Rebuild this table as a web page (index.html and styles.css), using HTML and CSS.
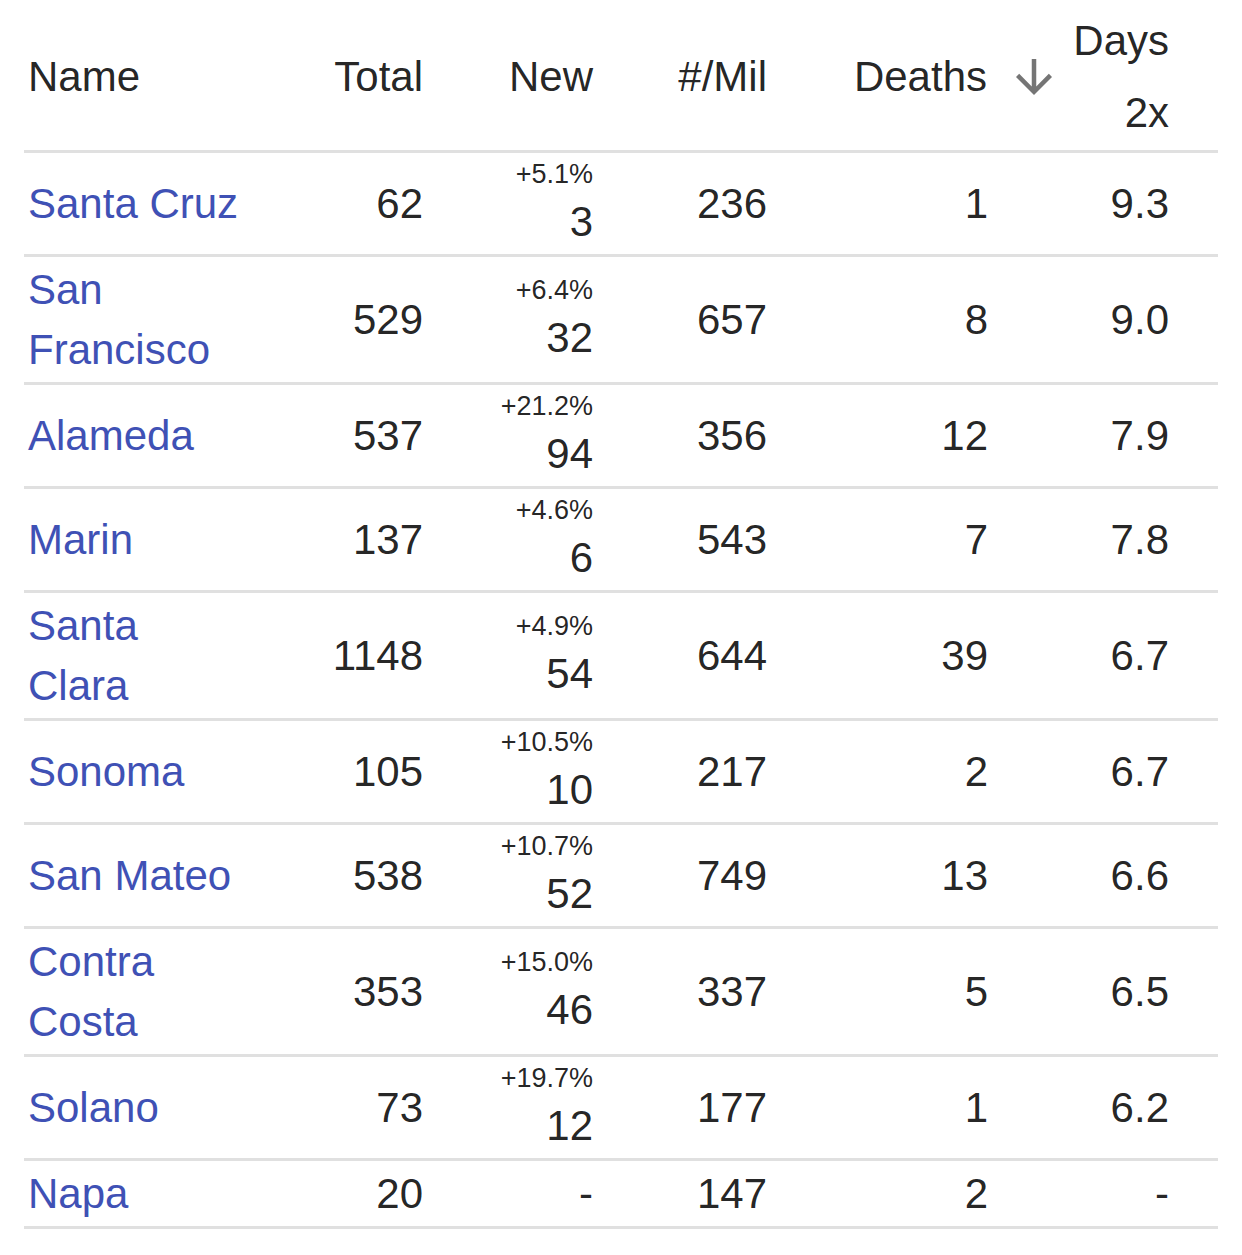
FILE: index.html
```html
<!DOCTYPE html>
<html lang="en">
<head>
<meta charset="utf-8">
<title>Bay Area counties</title>
<link rel="stylesheet" href="styles.css">
</head>
<body>
<div class="wrap">
<table class="grid">
  <colgroup>
    <col class="c-name"><col class="c-total"><col class="c-new"><col class="c-mil"><col class="c-deaths"><col class="c-days">
  </colgroup>
  <thead>
    <tr>
      <th class="left">Name</th>
      <th>Total</th>
      <th>New</th>
      <th>#/Mil</th>
      <th class="deaths-h"><span class="sort">Deaths<svg class="arrow" viewBox="0 0 24 24" width="54" height="54"><path d="M20 12l-1.41-1.41L13 16.17V4h-2v12.17l-5.58-5.59L4 12l8 8 8-8z"/></svg></span></th>
      <th class="last">Days 2x</th>
    </tr>
  </thead>
  <tbody>
    <tr><td class="left"><a href="#">Santa Cruz</a></td><td>62</td><td><span class="pct">+5.1%</span><span class="num">3</span></td><td>236</td><td class="deaths">1</td><td class="last">9.3</td></tr>
    <tr><td class="left"><a href="#">San Francisco</a></td><td>529</td><td><span class="pct">+6.4%</span><span class="num">32</span></td><td>657</td><td class="deaths">8</td><td class="last">9.0</td></tr>
    <tr><td class="left"><a href="#">Alameda</a></td><td>537</td><td><span class="pct">+21.2%</span><span class="num">94</span></td><td>356</td><td class="deaths">12</td><td class="last">7.9</td></tr>
    <tr><td class="left"><a href="#">Marin</a></td><td>137</td><td><span class="pct">+4.6%</span><span class="num">6</span></td><td>543</td><td class="deaths">7</td><td class="last">7.8</td></tr>
    <tr><td class="left"><a href="#">Santa Clara</a></td><td>1148</td><td><span class="pct">+4.9%</span><span class="num">54</span></td><td>644</td><td class="deaths">39</td><td class="last">6.7</td></tr>
    <tr><td class="left"><a href="#">Sonoma</a></td><td>105</td><td><span class="pct">+10.5%</span><span class="num">10</span></td><td>217</td><td class="deaths">2</td><td class="last">6.7</td></tr>
    <tr><td class="left"><a href="#">San Mateo</a></td><td>538</td><td><span class="pct">+10.7%</span><span class="num">52</span></td><td>749</td><td class="deaths">13</td><td class="last">6.6</td></tr>
    <tr><td class="left"><a href="#">Contra Costa</a></td><td>353</td><td><span class="pct">+15.0%</span><span class="num">46</span></td><td>337</td><td class="deaths">5</td><td class="last">6.5</td></tr>
    <tr><td class="left"><a href="#">Solano</a></td><td>73</td><td><span class="pct">+19.7%</span><span class="num">12</span></td><td>177</td><td class="deaths">1</td><td class="last">6.2</td></tr>
    <tr><td class="left"><a href="#">Napa</a></td><td>20</td><td>-</td><td>147</td><td class="deaths">2</td><td class="last">-</td></tr>
  </tbody>
</table>
</div>
</body>
</html>
```

FILE: styles.css
```css
html, body {
  margin: 0;
  padding: 0;
  background: #ffffff;
}

.wrap {
  padding: 0 24px;
}

.grid {
  width: 1194px;
  table-layout: fixed;
  border-collapse: separate;
  border-spacing: 0;
  font-family: "Liberation Sans", Arial, Helvetica, sans-serif;
  font-size: 42px;
  color: rgba(0, 0, 0, 0.87);
}

.c-name { width: 224px; }
.c-total { width: 178px; }
.c-new { width: 170px; }
.c-mil { width: 174px; }
.c-deaths { width: 294px; }
.c-days { width: 154px; }

.grid th,
.grid td {
  text-align: right;
  vertical-align: middle;
  border-bottom: 3px solid #e0e0e0;
  padding: 3px 3px 2px 4px;
  line-height: 60px;
  font-weight: 400;
}

.grid th {
  line-height: 72px;
  padding-top: 5px;
  padding-bottom: 1px;
}

.grid .left {
  text-align: left;
}

.grid .last {
  padding-right: 49px;
}

.grid td.deaths {
  padding-right: 76px;
}

.grid th.deaths-h {
  padding-right: 3px;
}

.sort {
  display: inline-flex;
  align-items: center;
  white-space: nowrap;
}

.arrow {
  margin-left: 20px;
  fill: #757575;
  flex: none;
}

.grid a {
  color: #3f51b5;
  text-decoration: none;
}

.pct {
  display: block;
  font-size: 27px;
  line-height: 36px;
}

.num {
  display: block;
  line-height: 60px;
}
```
